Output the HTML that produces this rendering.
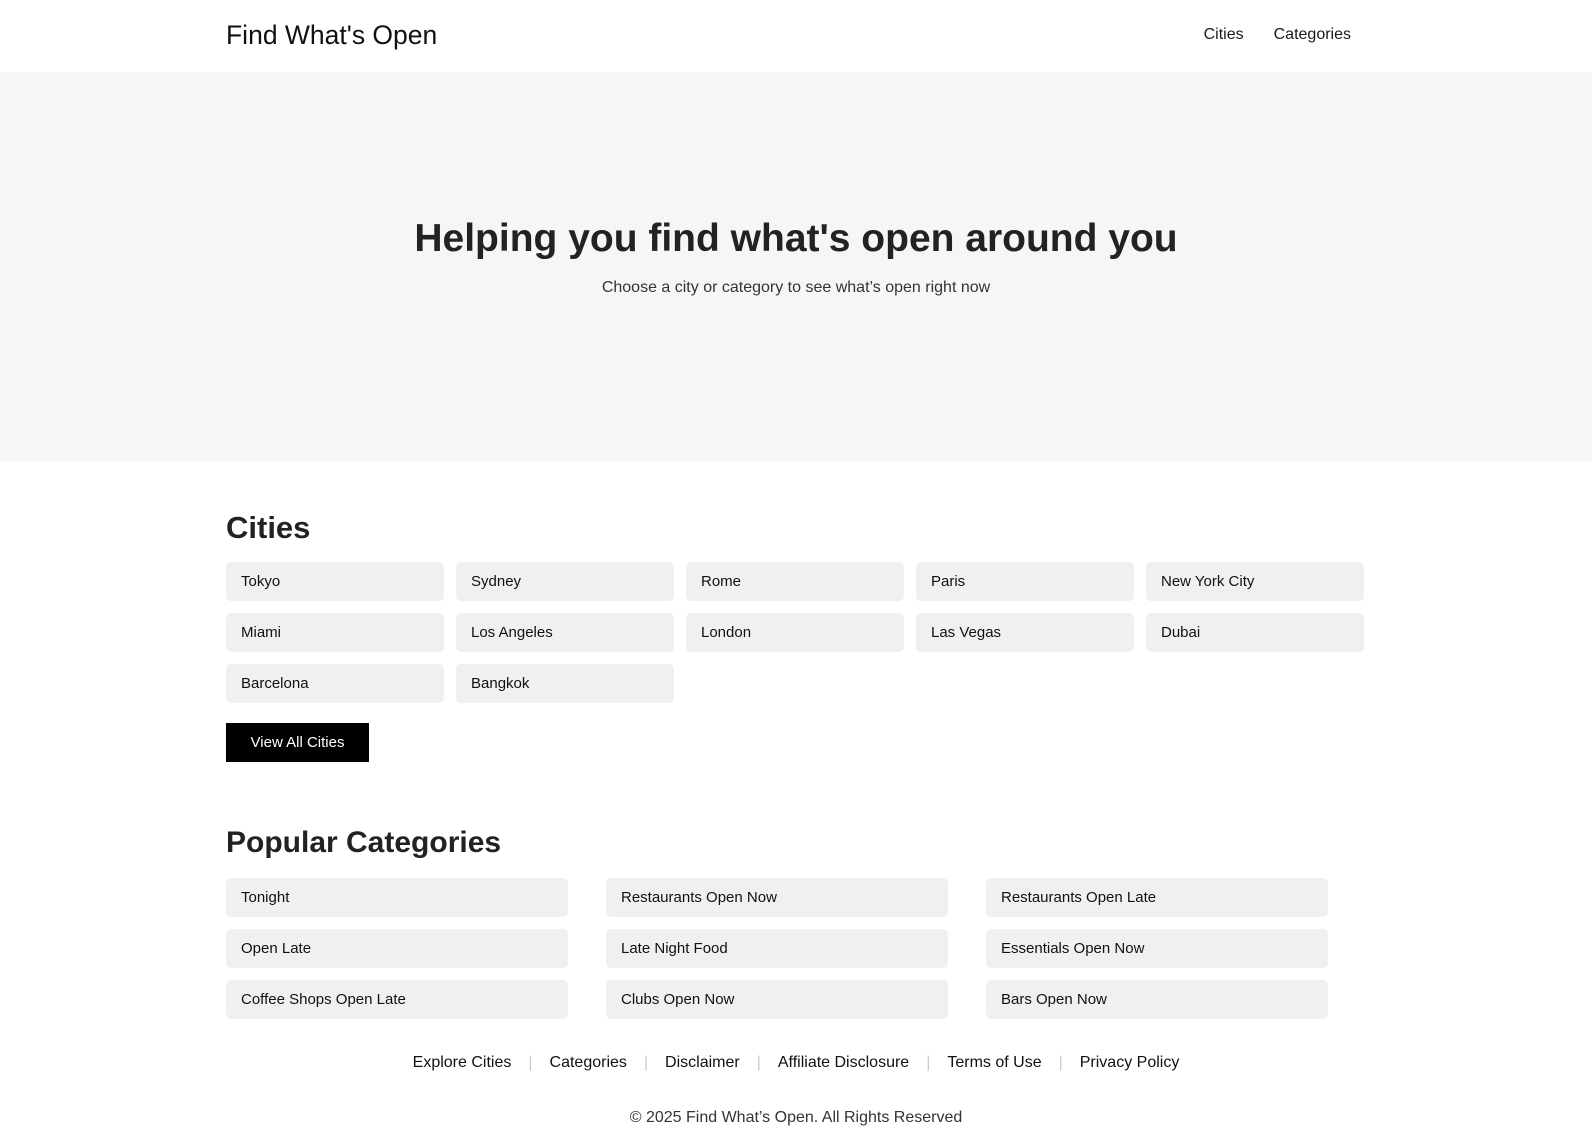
<!DOCTYPE html>
<html><head><style>
*{box-sizing:border-box;margin:0;padding:0}
body{width:1592px;height:1139px;font-family:"Liberation Sans",sans-serif;color:#1a1a1a;background:#fff;overflow:hidden}
.wrap{width:1140px;margin:0 auto;position:relative}
header{height:72px}
.logo{position:absolute;left:0;top:20px;font-size:26.5px;color:#111}
nav{position:absolute;right:15px;top:26px;font-size:16px}
nav span{margin-left:30px}
.hero{background:#f6f6f6;height:389px;text-align:center}
.hero h1{padding-top:145px;font-size:39px;font-weight:700;color:#222}
.hero p{margin-top:18px;font-size:16px;color:#333}
h2{font-size:31px;font-weight:700;color:#222}
.grid5{display:grid;grid-template-columns:repeat(5,218px);column-gap:12px;row-gap:12px}
.box{height:39px;background:#f0f0f0;border-radius:5px;padding:0 15px;line-height:39px;font-size:15px;color:#111}
.grid3{display:grid;grid-template-columns:repeat(3,342px);column-gap:38px;row-gap:12px}
.btn{display:inline-block;background:#000;color:#fff;height:39px;line-height:39px;width:143px;text-align:center;font-size:15px}
.foot{text-align:center;font-size:16px;color:#111}
.foot span.sep{color:#ccc;margin:0 17px}
</style></head><body>
<header><div class="wrap"><div class="logo">Find What's Open</div><nav><span>Cities</span><span>Categories</span></nav></div></header>
<div class="hero"><h1>Helping you find what's open around you</h1><p>Choose a city or category to see what’s open right now</p></div>
<div class="wrap">
<h2 style="position:absolute;top:49px">Cities</h2>
<div class="grid5" style="position:absolute;top:101px;left:0">
<div class="box">Tokyo</div><div class="box">Sydney</div><div class="box">Rome</div><div class="box">Paris</div><div class="box">New York City</div>
<div class="box">Miami</div><div class="box">Los Angeles</div><div class="box">London</div><div class="box">Las Vegas</div><div class="box">Dubai</div>
<div class="box">Barcelona</div><div class="box">Bangkok</div></div>
<div class="btn" style="position:absolute;top:262px;left:0">View All Cities</div>
<h2 style="position:absolute;top:365px;font-size:30px">Popular Categories</h2>
<div class="grid3" style="position:absolute;top:417px;left:0">
<div class="box">Tonight</div><div class="box">Restaurants Open Now</div><div class="box">Restaurants Open Late</div>
<div class="box">Open Late</div><div class="box">Late Night Food</div><div class="box">Essentials Open Now</div>
<div class="box">Coffee Shops Open Late</div><div class="box">Clubs Open Now</div><div class="box">Bars Open Now</div></div>
<div class="foot" style="position:absolute;top:593px;left:0;width:1140px">Explore Cities<span class="sep">|</span>Categories<span class="sep">|</span>Disclaimer<span class="sep">|</span>Affiliate Disclosure<span class="sep">|</span>Terms of Use<span class="sep">|</span>Privacy Policy</div>
<div class="foot" style="position:absolute;top:648px;left:0;width:1140px;color:#333">© 2025 Find What’s Open. All Rights Reserved</div>
</div>
</body></html>
